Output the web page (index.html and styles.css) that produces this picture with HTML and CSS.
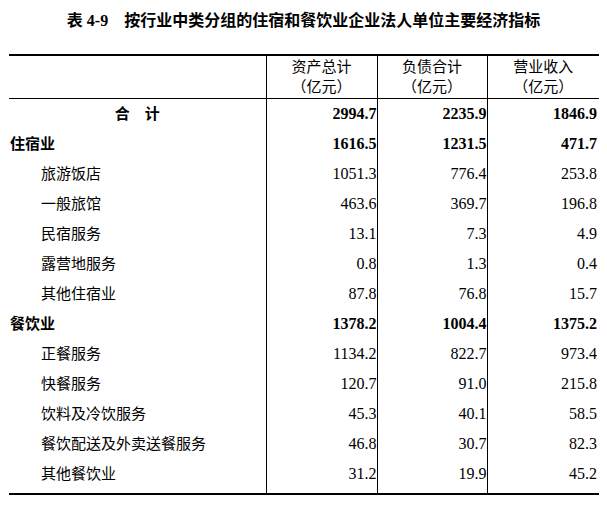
FILE: index.html
```html
<!DOCTYPE html>
<html lang="zh-CN">
<head>
<meta charset="utf-8">
<title>表 4-9</title>
<link rel="stylesheet" href="styles.css">
</head>
<body>
<h1 class="title">表 4-9　按行业中类分组的住宿和餐饮业企业法人单位主要经济指标</h1>
<table class="stats">
  <colgroup>
    <col class="c-label">
    <col class="c-num">
    <col class="c-num2">
    <col class="c-num3">
  </colgroup>
  <thead>
    <tr>
      <th class="label"></th>
      <th class="num">资产总计<br>（亿元）</th>
      <th class="num">负债合计<br>（亿元）</th>
      <th class="num">营业收入<br>（亿元）</th>
    </tr>
  </thead>
  <tbody>
    <tr class="bold">
      <td class="label total">合　计</td>
      <td class="num">2994.7</td>
      <td class="num">2235.9</td>
      <td class="num">1846.9</td>
    </tr>
    <tr class="bold">
      <td class="label">住宿业</td>
      <td class="num">1616.5</td>
      <td class="num">1231.5</td>
      <td class="num">471.7</td>
    </tr>
    <tr>
      <td class="label sub">旅游饭店</td>
      <td class="num">1051.3</td>
      <td class="num">776.4</td>
      <td class="num">253.8</td>
    </tr>
    <tr>
      <td class="label sub">一般旅馆</td>
      <td class="num">463.6</td>
      <td class="num">369.7</td>
      <td class="num">196.8</td>
    </tr>
    <tr>
      <td class="label sub">民宿服务</td>
      <td class="num">13.1</td>
      <td class="num">7.3</td>
      <td class="num">4.9</td>
    </tr>
    <tr>
      <td class="label sub">露营地服务</td>
      <td class="num">0.8</td>
      <td class="num">1.3</td>
      <td class="num">0.4</td>
    </tr>
    <tr>
      <td class="label sub">其他住宿业</td>
      <td class="num">87.8</td>
      <td class="num">76.8</td>
      <td class="num">15.7</td>
    </tr>
    <tr class="bold">
      <td class="label">餐饮业</td>
      <td class="num">1378.2</td>
      <td class="num">1004.4</td>
      <td class="num">1375.2</td>
    </tr>
    <tr>
      <td class="label sub">正餐服务</td>
      <td class="num">1134.2</td>
      <td class="num">822.7</td>
      <td class="num">973.4</td>
    </tr>
    <tr>
      <td class="label sub">快餐服务</td>
      <td class="num">120.7</td>
      <td class="num">91.0</td>
      <td class="num">215.8</td>
    </tr>
    <tr>
      <td class="label sub">饮料及冷饮服务</td>
      <td class="num">45.3</td>
      <td class="num">40.1</td>
      <td class="num">58.5</td>
    </tr>
    <tr>
      <td class="label sub">餐饮配送及外卖送餐服务</td>
      <td class="num">46.8</td>
      <td class="num">30.7</td>
      <td class="num">82.3</td>
    </tr>
    <tr class="last">
      <td class="label sub">其他餐饮业</td>
      <td class="num">31.2</td>
      <td class="num">19.9</td>
      <td class="num">45.2</td>
    </tr>
  </tbody>
</table>
</body>
</html>
```
FILE: styles.css
```css
html, body {
  margin: 0;
  padding: 0;
  background: #fff;
  color: #000;
  font-family: "Liberation Serif", "Noto Sans CJK SC", serif;
}

.title {
  margin: 0;
  box-sizing: border-box;
  height: 54px;
  padding-top: 11px;
  font-size: 16px;
  line-height: 20px;
  font-weight: bold;
  text-align: center;
}

.stats {
  margin-left: 9px;
  width: 590px;
  table-layout: fixed;
  border-collapse: collapse;
  border-top: 2px solid #000;
  border-bottom: 2px solid #000;
  font-size: 15px;
}

.c-label { width: 257px; }
.c-num { width: 111px; }
.c-num2 { width: 110px; }
.c-num3 { width: 112px; }

.stats th {
  font-weight: normal;
  line-height: 20px;
  padding: 1px 0;
  text-align: center;
  border-bottom: 1px solid #000;
}

.stats th.num,
.stats td.num {
  border-left: 1px solid #000;
}

.stats td {
  height: 30px;
  padding: 0;
  line-height: 30px;
  white-space: nowrap;
}

.stats td.num {
  text-align: right;
  padding-right: 0;
  font-size: 16px;
}

.stats td.num:last-child {
  padding-right: 2px;
}

.stats td.label {
  padding-left: 1px;
}

.stats td.total {
  text-align: center;
  padding-left: 0;
}

.stats td.sub {
  padding-left: 32px;
}

.bold td {
  font-weight: bold;
}

.last td {
  height: 34px;
  vertical-align: top;
}
```
